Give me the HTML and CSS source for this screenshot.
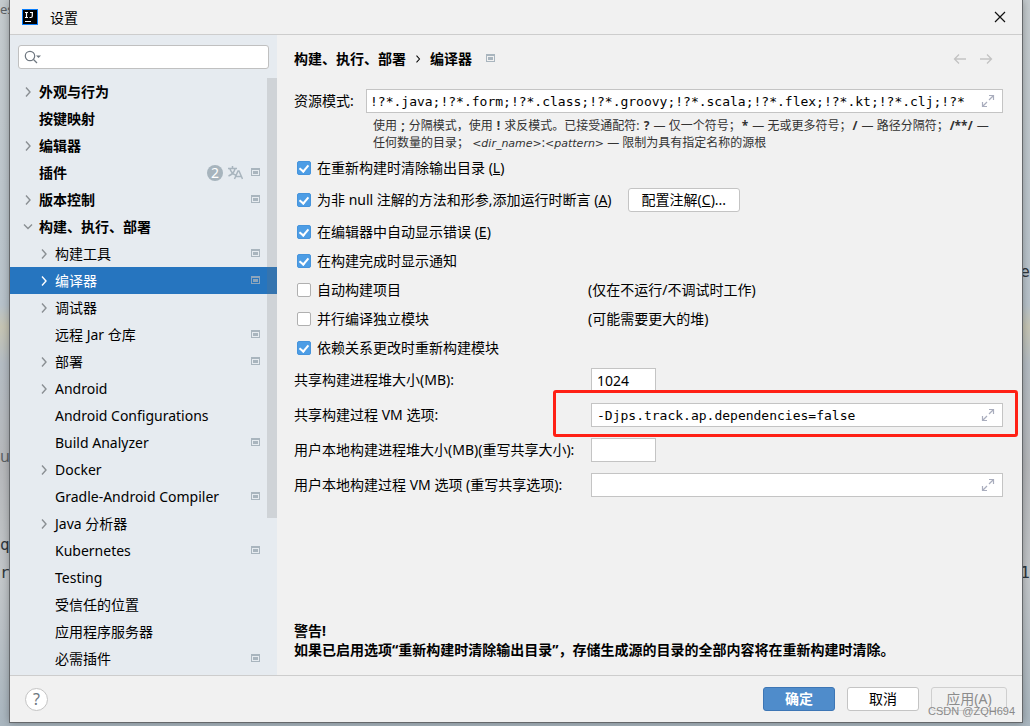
FILE: index.html
```html
<!DOCTYPE html>
<html lang="zh-CN">
<head>
  <meta charset="UTF-8" />
  <meta name="viewport" content="width=device-width, initial-scale=1.0"/>
  <title>设置</title>
  <link rel="stylesheet" href="styles.css">
</head>
<body>

  <svg class="sprite" aria-hidden="true">
    <symbol id="chevron" viewBox="0 0 16 16"><path d="M6 3.5 L10 8 L6 12.5" fill="none" stroke="currentColor" stroke-width="1.4"/></symbol>
    <symbol id="chevron-down" viewBox="0 0 16 16"><path d="M4 5.5 L8 9.5 L12 5.5" fill="none" stroke="currentColor" stroke-width="1.4"/></symbol>
    <symbol id="project" viewBox="0 0 16 16"><path d="M4 3h9v8h-9z M5 5v5h7v-5z M6 6h5v3h-5z" fill="currentColor" fill-rule="evenodd"/></symbol>
    <symbol id="expand" viewBox="0 0 14 14"><path d="M8 1.5h4.5V6M12 2L8 6M1.5 8v4.5H6M2 12l4-4" fill="none" stroke="currentColor" stroke-width="1.2"/></symbol>
    <symbol id="translate" viewBox="0 0 16 16"><path d="M1 3.5h9M5.500 1v2.500M3 4c1 3 3 5 5.500 6M8 4C7 7.500 5 9.500 1.500 11M7.500 14l3.500-8h1l3.500 8M9 11.500h5" fill="none" stroke="currentColor" stroke-width="1.5"/></symbol>
  </svg>

  <!-- editor behind the dialog -->
  <div class="backdrop">
    <span class="frag tab">es</span>
    <span class="frag panel">u</span>
    <span class="frag code-q">q</span>
    <span class="frag code-r">r</span>
    <span class="frag code-e">e</span>
    <span class="frag code-1">1</span>
  </div>

  <div class="dialog">
    <header class="titlebar">
      <svg class="logo" viewBox="0 0 16 16">
        <rect width="16" height="16" fill="#087cfa"/>
        <rect x="1" y="1" width="14" height="14" fill="#000"/>
        <path d="M3 3.500h3M4.500 3.500v5M3 8.500h3M8 3.500h3M10.300 3.500v3.500q0 1.500-1.500 1.500H7.500M3 12.500h6" fill="none" stroke="#fff" stroke-width="1.2"/>
      </svg>
      <span class="title">设置</span>
      <button class="close" aria-label="关闭">
        <svg viewBox="0 0 12 12"><path d="M1 1l10 10M11 1L1 11" stroke="#111" stroke-width="1.2"/></svg>
      </button>
    </header>

    <div class="content">
      <aside class="sidebar">
        <div class="search">
          <svg viewBox="0 0 20 16"><circle cx="6" cy="7" r="4.700" fill="none" stroke="#6e7780" stroke-width="1.2"/><path d="M9.500 10.500l3.500 3.500" stroke="#6e7780" stroke-width="1.2"/><path d="M12 6.500h5l-2.500 2.500z" fill="#6e7780"/></svg>
          <input type="text" aria-label="搜索设置">
        </div>
        <ul class="tree">
          <li class="top"><svg><use href="#chevron"/></svg><span>外观与行为</span></li>
          <li class="top"><svg></svg><span>按键映射</span></li>
          <li class="top"><svg><use href="#chevron"/></svg><span>编辑器</span></li>
          <li class="top"><svg></svg><span>插件</span><b class="badge">2</b><svg class="mark"><use href="#translate"/></svg><svg class="mark"><use href="#project"/></svg></li>
          <li class="top"><svg><use href="#chevron"/></svg><span>版本控制</span><svg class="mark"><use href="#project"/></svg></li>
          <li class="top"><svg><use href="#chevron-down"/></svg><span>构建、执行、部署</span></li>
          <li><svg><use href="#chevron"/></svg><span>构建工具</span><svg class="mark"><use href="#project"/></svg></li>
          <li class="selected"><svg><use href="#chevron"/></svg><span>编译器</span><svg class="mark"><use href="#project"/></svg></li>
          <li><svg><use href="#chevron"/></svg><span>调试器</span></li>
          <li><svg></svg><span>远程 Jar 仓库</span><svg class="mark"><use href="#project"/></svg></li>
          <li><svg><use href="#chevron"/></svg><span>部署</span><svg class="mark"><use href="#project"/></svg></li>
          <li><svg><use href="#chevron"/></svg><span>Android</span></li>
          <li><svg></svg><span>Android Configurations</span></li>
          <li><svg></svg><span>Build Analyzer</span><svg class="mark"><use href="#project"/></svg></li>
          <li><svg><use href="#chevron"/></svg><span>Docker</span></li>
          <li><svg></svg><span>Gradle-Android Compiler</span><svg class="mark"><use href="#project"/></svg></li>
          <li><svg><use href="#chevron"/></svg><span>Java 分析器</span></li>
          <li><svg></svg><span>Kubernetes</span><svg class="mark"><use href="#project"/></svg></li>
          <li><svg></svg><span>Testing</span></li>
          <li><svg></svg><span>受信任的位置</span></li>
          <li><svg></svg><span>应用程序服务器</span></li>
          <li><svg></svg><span>必需插件</span><svg class="mark"><use href="#project"/></svg></li>
        </ul>
        <div class="scrollbar"></div>
      </aside>

      <main class="main">
        <div class="breadcrumb">
          <span>构建、执行、部署</span>
          <svg class="sep"><use href="#chevron"/></svg>
          <span>编译器</span>
          <svg class="mark"><use href="#project"/></svg>
          <div class="nav">
            <button aria-label="后退"><svg viewBox="0 0 14 14"><path d="M13 7H2M6 2.500L1.500 7 6 11.500" fill="none" stroke="currentColor" stroke-width="1.3"/></svg></button>
            <button aria-label="前进"><svg viewBox="0 0 14 14"><path d="M1 7h11M8 2.500L12.500 7 8 11.500" fill="none" stroke="currentColor" stroke-width="1.3"/></svg></button>
          </div>
        </div>

        <div class="patterns">
          <label for="patterns">资源模式:</label>
          <div class="field mono">
            <input type="text" id="patterns" value="!?*.java;!?*.form;!?*.class;!?*.groovy;!?*.scala;!?*.flex;!?*.kt;!?*.clj;!?*">
            <svg><use href="#expand"/></svg>
          </div>
        </div>
        <p class="hint">使用 <b>;</b> 分隔模式，使用 <b>!</b> 求反模式。已接受通配符: <b>?</b> — 仅一个符号；<b>*</b> — 无或更多符号；<b>/</b> — 路径分隔符；<b>/**/</b> —<br>任何数量的目录； <i>&lt;dir_name&gt;</i>:<i>&lt;pattern&gt;</i> — 限制为具有指定名称的源根</p>

        <div class="options">
          <div class="option"><label><input type="checkbox" checked>在重新构建时清除输出目录 (<u>L</u>)</label></div>
          <div class="option with-button">
            <label><input type="checkbox" checked>为非 null 注解的方法和形参,添加运行时断言 (<u>A</u>)</label>
            <button class="btn">配置注解(<u>C</u>)...</button>
          </div>
          <div class="option"><label><input type="checkbox" checked>在编辑器中自动显示错误 (<u>E</u>)</label></div>
          <div class="option"><label><input type="checkbox" checked>在构建完成时显示通知</label></div>
          <div class="option noted"><label><input type="checkbox">自动构建项目</label><span>(仅在不运行/不调试时工作)</span></div>
          <div class="option noted"><label><input type="checkbox">并行编译独立模块</label><span>(可能需要更大的堆)</span></div>
          <div class="option"><label><input type="checkbox" checked>依赖关系更改时重新构建模块</label></div>
        </div>

        <div class="form">
          <div class="form-row">
            <label for="heap">共享构建进程堆大小(MB):</label>
            <div class="field short"><input type="text" id="heap" value="1024"></div>
          </div>
          <div class="form-row highlight">
            <label for="vm">共享构建过程 VM 选项:</label>
            <div class="field mono"><input type="text" id="vm" value="-Djps.track.ap.dependencies=false"><svg><use href="#expand"/></svg></div>
          </div>
          <div class="form-row">
            <label for="userHeap">用户本地构建进程堆大小(MB)(重写共享大小):</label>
            <div class="field short"><input type="text" id="userHeap"></div>
          </div>
          <div class="form-row">
            <label for="userVm">用户本地构建过程 VM 选项 (重写共享选项):</label>
            <div class="field mono"><input type="text" id="userVm"><svg><use href="#expand"/></svg></div>
          </div>
        </div>

        <p class="warning">警告!<br>如果已启用选项“重新构建时清除输出目录”，存储生成源的目录的全部内容将在重新构建时清除。</p>
      </main>
    </div>

    <footer class="footer">
      <button class="help" aria-label="帮助">?</button>
      <button class="btn primary">确定</button>
      <button class="btn">取消</button>
      <button class="btn apply" disabled>应用(A)</button>
    </footer>
  </div>

  <div class="watermark">CSDN @ZQH694</div>

</body>
</html>
```
FILE: styles.css
```css
*, *::after { box-sizing: border-box; }

body {
  margin: 0;
  min-height: 100vh;
  display: flex;
  position: relative;
  overflow: hidden;
  font-family: "Noto Sans", "Noto Sans CJK SC", sans-serif;
  font-size: 14px;
  line-height: 19px;
  color: #000;
  background: #b9c0c5;
}

p, ul { margin: 0; padding: 0; }

svg {
  display: block;
  flex: none;
  width: 16px;
  height: 16px;
}

.sprite { position: absolute; width: 0; height: 0; }

input, button {
  font: inherit;
  color: inherit;
  margin: 0;
}

/* editor behind the dialog */
.backdrop {
  position: absolute;
  inset: 0;
  background: linear-gradient(#c5cbce, #b8c3cb 42%, #c6c5b4 45%, #b5bdc4 50%, #b7b9bc 64%, #c3c7ca 80%, #a9b6bf);
}

.frag {
  position: absolute;
  color: #30373c;
  font-family: "DejaVu Sans Mono", monospace;
  font-size: 16px;
}

.tab { left: 0; top: 0; font-family: "Noto Sans", sans-serif; font-size: 13px; color: #5d6265; }
.panel { left: 0; top: 447px; font-family: "Noto Sans", sans-serif; color: #5d6265; }
.code-q { left: 0; top: 535px; }
.code-r { left: 0; top: 563px; }
.code-e { right: 0; top: 262px; }
.code-1 { right: 0; top: 563px; }

.dialog {
  position: relative;
  flex: 1;
  min-width: 0;
  display: flex;
  flex-direction: column;
  margin: 0 7px 3px 9px;
  border: 1px solid #65686b;
  border-top: none;
  background: #f1f1f1;
  box-shadow: 0 0 8px rgba(0,0,0,0.3);
}

.titlebar {
  display: flex;
  align-items: center;
  height: 35px;
  padding: 0 16px 0 12px;
  border-bottom: 1px solid #cdcdcd;
}

.title { margin-left: 12px; }

.close {
  margin-left: auto;
  padding: 0;
  border: none;
  background: none;
}

.close svg { width: 12px; height: 12px; }

.content {
  flex: 1;
  display: flex;
}

/* sidebar */
.sidebar {
  position: relative;
  flex: none;
  width: 267px;
  background: #e6ebf0;
}

.search {
  display: flex;
  align-items: center;
  height: 24px;
  margin: 10px 8px 9px;
  padding-left: 5px;
  border: 1px solid #c0c0c0;
  border-radius: 3px;
  background: #fff;
}

.search svg { width: 20px; }

.search input {
  flex: 1;
  min-width: 0;
  height: 22px;
  border: none;
  outline: none;
  background: none;
}

.tree {
  list-style: none;
  padding-bottom: 3px;
}

.tree li {
  display: flex;
  align-items: center;
  gap: 4px;
  height: 27px;
  padding: 0 14px 0 26px;
  color: #000;
}

.tree li.top { padding-left: 10px; font-weight: bold; }
.tree li > span { flex: 1; margin-left: -1px; white-space: nowrap; }
.tree svg { color: #8a8f93; }
.tree .mark, .breadcrumb .mark { color: #a9b5be; }

.tree li.selected { background: #2675bf; color: #fff; }
.tree li.selected svg { color: #fff; }
.tree li.selected .mark { color: #8ca5bc; }

.badge {
  width: 16px;
  height: 16px;
  border-radius: 8px;
  background: #a7b4bd;
  color: #fff;
  font-weight: normal;
  line-height: 16px;
  text-align: center;
}

.scrollbar {
  position: absolute;
  top: 43px;
  right: 0;
  width: 10px;
  height: 440px;
  background: rgba(115,115,115,0.2);
}

/* settings page */
.main {
  flex: 1;
  min-width: 0;
  display: flex;
  flex-direction: column;
  padding: 0 19px 16px 17px;
}

.breadcrumb {
  display: flex;
  align-items: center;
  height: 48px;
  font-weight: bold;
  line-height: 20px;
}

.sep { width: 12px; height: 12px; margin: 0 6px; }
.breadcrumb .mark { margin-left: 10px; }

.nav {
  display: flex;
  gap: 12px;
  margin-left: auto;
  margin-right: 10px;
}

.nav button {
  padding: 0;
  border: none;
  background: none;
  color: #c3c3c3;
}

.nav svg { width: 14px; height: 14px; }

.patterns {
  display: flex;
  align-items: center;
  margin-top: 6px;
  line-height: 20px;
}

.patterns label { flex: none; width: 72px; }

.field {
  flex: 1;
  min-width: 0;
  display: flex;
  align-items: center;
  height: 24px;
  padding-right: 7px;
  border: 1px solid #c4c4c4;
  background: #fff;
}

.field input {
  flex: 1;
  min-width: 0;
  height: 22px;
  padding: 0 5px;
  border: none;
  outline: none;
  background: none;
}

.field svg { width: 14px; height: 14px; color: #a9adbd; }
.field.short { flex: none; width: 65px; padding-right: 0; }
.mono input { font-family: "DejaVu Sans Mono", monospace; font-size: 13px; }
.patterns input { padding: 0 6px 0 3px; }

.hint {
  margin: 4px 0 1px 79px;
  font-size: 12px;
  line-height: 17px;
  color: #333;
  white-space: nowrap;
}

.hint b { margin: 0 1px; }
.hint i { font-family: "DejaVu Sans", sans-serif; font-size: 11px; }

.option {
  display: flex;
  align-items: center;
  height: 29px;
}

.option.with-button { height: 35px; gap: 16px; }

.option label {
  display: flex;
  align-items: center;
  white-space: pre;
}

.noted label { width: 294px; }

.option input {
  appearance: none;
  flex: none;
  position: relative;
  width: 14px;
  height: 14px;
  margin: 0 6px 0 3px;
  border: 1px solid #b0b0b0;
  border-radius: 2px;
  background: #fff;
}

.option input:checked {
  border-color: #4694dc;
  background: #4d9de5;
}

.option input:checked::after {
  content: "";
  position: absolute;
  left: 3px;
  top: 1px;
  width: 6px;
  height: 9px;
  border: solid #fff;
  border-width: 0 2px 2px 0;
  transform: rotate(40deg);
}

.btn {
  height: 24px;
  min-width: 72px;
  padding: 0 13px;
  border: 1px solid #c4c4c4;
  border-radius: 3px;
  background: #fff;
  line-height: 22px;
}

.form {
  display: flex;
  flex-direction: column;
  gap: 11px;
  margin-top: 6px;
  line-height: 20px;
}

.form-row {
  position: relative;
  display: flex;
  align-items: center;
}

.form-row label { flex: none; width: 297px; white-space: nowrap; }

.highlight::after {
  content: "";
  position: absolute;
  inset: -13px -15px -10px 259px;
  border: 3px solid #ff2015;
  border-radius: 3px;
  pointer-events: none;
}

.warning {
  margin-top: auto;
  font-weight: bold;
}

/* bottom bar */
.footer {
  display: flex;
  align-items: center;
  gap: 12px;
  height: 47px;
  padding: 0 15px;
  border-top: 1px solid #cdcdcd;
}

.help {
  width: 23px;
  height: 23px;
  margin-right: auto;
  padding: 0;
  border: 1px solid #c4c4c4;
  border-radius: 50%;
  background: #fff;
  color: #6e7780;
  font-size: 16px;
  line-height: 20px;
}

.primary {
  border-color: #3d76b5;
  background: #4f8ccb;
  color: #fff;
  font-weight: bold;
}

.apply {
  width: 76px;
  border-color: #cfcfcf;
  background: none;
  color: #8c8c8c;
}

/* sits over the bottom right corner */
.watermark {
  position: absolute;
  right: 15px;
  bottom: 6px;
  font-family: "Liberation Sans", sans-serif;
  font-size: 11px;
  line-height: 17px;
  color: #8a8a8a;
}
```
